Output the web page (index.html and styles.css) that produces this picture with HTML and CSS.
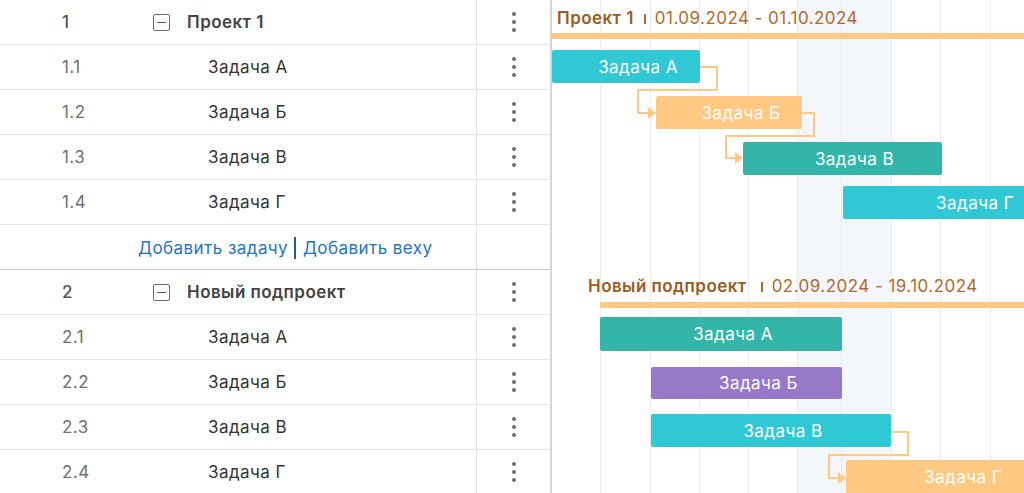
FILE: index.html
```html
<!DOCTYPE html>
<html lang="ru">

<head>
    <meta charset="UTF-8">
    <meta name="viewport" content="width=device-width, initial-scale=1.0">
    <title>Гант</title>
    <link rel="stylesheet" href="styles.css">
</head>

<body>
    <div class="app">
        <div class="grid">
            <div class="row summary">
                <div class="num">1</div>
                <div class="name"><span class="toggle"></span>Проект 1</div>
                <div class="actions"><span class="dots"><i></i><i></i><i></i></span></div>
            </div>
            <div class="row">
                <div class="num">1.1</div>
                <div class="name task">Задача А</div>
                <div class="actions"><span class="dots"><i></i><i></i><i></i></span></div>
            </div>
            <div class="row">
                <div class="num">1.2</div>
                <div class="name task">Задача Б</div>
                <div class="actions"><span class="dots"><i></i><i></i><i></i></span></div>
            </div>
            <div class="row">
                <div class="num">1.3</div>
                <div class="name task">Задача В</div>
                <div class="actions"><span class="dots"><i></i><i></i><i></i></span></div>
            </div>
            <div class="row">
                <div class="num">1.4</div>
                <div class="name task">Задача Г</div>
                <div class="actions"><span class="dots"><i></i><i></i><i></i></span></div>
            </div>
            <div class="row add-row">
                <div class="add-links">
                    <a href="#">Добавить задачу</a><span class="sep"></span><a href="#">Добавить веху</a>
                </div>
                <div class="actions"></div>
            </div>
            <div class="row summary">
                <div class="num">2</div>
                <div class="name"><span class="toggle"></span>Новый подпроект</div>
                <div class="actions"><span class="dots"><i></i><i></i><i></i></span></div>
            </div>
            <div class="row">
                <div class="num">2.1</div>
                <div class="name task">Задача А</div>
                <div class="actions"><span class="dots"><i></i><i></i><i></i></span></div>
            </div>
            <div class="row">
                <div class="num">2.2</div>
                <div class="name task">Задача Б</div>
                <div class="actions"><span class="dots"><i></i><i></i><i></i></span></div>
            </div>
            <div class="row">
                <div class="num">2.3</div>
                <div class="name task">Задача В</div>
                <div class="actions"><span class="dots"><i></i><i></i><i></i></span></div>
            </div>
            <div class="row">
                <div class="num">2.4</div>
                <div class="name task">Задача Г</div>
                <div class="actions"><span class="dots"><i></i><i></i><i></i></span></div>
            </div>
        </div>

        <div class="chart">
            <!-- timeline columns -->
            <div class="scale">
                <div class="col" style="width:49px"></div>
                <div class="col" style="width:50px"></div>
                <div class="col" style="width:49px"></div>
                <div class="col" style="width:49px"></div>
                <div class="col" style="width:49px"></div>
                <div class="col weekend" style="width:44px"></div>
                <div class="col weekend" style="width:50px"></div>
                <div class="col" style="width:49px"></div>
                <div class="col" style="width:50px"></div>
                <div class="col" style="width:40px"></div>
            </div>

            <div class="chart-rows">
                <div class="chart-row">
                    <div class="project-label" style="left:5px;top:8px">
                        <b>Проект 1</b><span class="mark"></span><span class="dates">01.09.2024 - 01.10.2024</span>
                    </div>
                    <div class="project-bar" style="left:0;top:33px"></div>
                </div>
                <div class="chart-row">
                    <div class="bar cyan" style="left:0;width:148px;top:5px">Задача А</div>
                </div>
                <div class="chart-row">
                    <div class="bar orange" style="left:104px;width:146px;top:6px">Задача Б</div>
                </div>
                <div class="chart-row">
                    <div class="bar teal" style="left:191px;width:199px;top:7px">Задача В</div>
                </div>
                <div class="chart-row">
                    <div class="bar cyan" style="left:291px;width:240px;top:6px">Задача Г</div>
                </div>
                <div class="chart-row"></div>
                <div class="chart-row">
                    <div class="project-label" style="left:36px;top:6px">
                        <b>Новый подпроект</b><span class="mark wide"></span><span class="dates">02.09.2024 - 19.10.2024</span>
                    </div>
                    <div class="project-bar" style="left:48px;top:32px"></div>
                </div>
                <div class="chart-row">
                    <div class="bar teal" style="left:48px;width:242px;top:2px;height:34px">Задача А</div>
                </div>
                <div class="chart-row">
                    <div class="bar purple" style="left:99px;width:191px;top:7px;height:32px">Задача Б</div>
                </div>
                <div class="chart-row">
                    <div class="bar cyan" style="left:99px;width:240px;top:9px">Задача В</div>
                </div>
                <div class="chart-row">
                    <div class="bar orange" style="left:294px;width:210px;top:10px">Задача Г</div>
                </div>
            </div>

            <svg class="links" width="472" height="493">
                <g fill="none" stroke="#ffc984" stroke-width="2">
                    <path d="M148 67 H165 V90 H86 V113 H97" />
                    <path d="M250 113 H262 V136 H174 V158 H184" />
                    <path d="M339 432 H356 V455 H277 V478 H287" />
                </g>
                <g fill="#ffc984">
                    <polygon points="96,107 104,113 96,119" />
                    <polygon points="183,152 191,158 183,164" />
                    <polygon points="286,472 294,478 286,484" />
                </g>
            </svg>
        </div>
    </div>
</body>

</html>
```

FILE: styles.css
```css
body {
    margin: 0;
    font-family: Inter, "Noto Sans", sans-serif;
    font-size: 17px;
    letter-spacing: 0.45px;
    color: #333;
    background: #fff;
    overflow: hidden;
}

.app {
    display: flex;
    height: 493px;
    overflow: hidden;
}

/* left table */

.grid {
    width: 550px;
    flex-shrink: 0;
    border-right: 2px solid #d4d4d4;
}

.row {
    display: flex;
    align-items: center;
    height: 44px;
    border-bottom: 1px solid #e6e6e6;
}

.num {
    width: 153px;
    padding-left: 62px;
    box-sizing: border-box;
    color: #6f6f6f;
}

.summary .num {
    color: #555;
    font-weight: 500;
}

.name {
    flex: 1;
    display: flex;
    align-items: center;
    height: 100%;
}

.summary .name {
    font-weight: 600;
    color: #444;
}

.name.task {
    padding-left: 55px;
}

.toggle {
    width: 15px;
    height: 15px;
    border: 1px solid #6a6a6a;
    border-radius: 2px;
    margin-right: 17px;
    position: relative;
    box-sizing: content-box;
}

.toggle::after {
    content: "";
    position: absolute;
    left: 3px;
    right: 3px;
    top: 7px;
    height: 1px;
    background: #555;
}

.actions {
    width: 73px;
    height: 100%;
    border-left: 1px solid #e3e3e3;
    display: flex;
    align-items: center;
    justify-content: center;
}

.dots {
    display: flex;
    flex-direction: column;
    gap: 4px;
}

.dots i {
    display: block;
    width: 4px;
    height: 4px;
    border-radius: 50%;
    background: #6e6e6e;
}

.add-row {
    border-bottom-color: #cfcfcf;
}

.add-links {
    flex: 1;
    display: flex;
    align-items: center;
    padding-left: 138px;
    padding-top: 2px;
}

.add-links a {
    color: #1f73c6;
    text-decoration: none;
}

.add-links .sep {
    width: 2px;
    height: 22px;
    background: #1f5f9e;
    margin: 0 7px 0 6px;
}

/* chart */

.chart {
    flex: 1;
    position: relative;
    overflow: hidden;
}

.scale {
    position: absolute;
    inset: 0;
    display: flex;
}

.col {
    flex-shrink: 0;
    height: 100%;
    border-right: 1px solid #ececec;
    box-sizing: border-box;
}

.col.weekend {
    background: #f3f6fa;
}

.chart-rows {
    position: relative;
}

.chart-row {
    position: relative;
    height: 45px;
}

.project-label {
    position: absolute;
    display: flex;
    align-items: center;
    white-space: nowrap;
    line-height: 20px;
}

.project-label b {
    font-weight: 600;
    color: #9b5c22;
}

.project-label .dates {
    color: #b36a2d;
}

.mark {
    width: 2px;
    height: 10px;
    background: #b36a2d;
    margin: 2px 9px 0 10px;
}

.mark.wide {
    margin-left: 14px;
}

.project-bar {
    position: absolute;
    right: 0;
    height: 6px;
    background: #ffc984;
}

.bar {
    position: absolute;
    height: 33px;
    border-radius: 2px;
    padding-left: 24px;
    box-sizing: border-box;
    display: flex;
    align-items: center;
    justify-content: center;
    color: #fff;
    white-space: nowrap;
}

.bar.cyan {
    background: #2fc8d4;
}

.bar.teal {
    background: #33b6a9;
}

.bar.orange {
    background: #ffc984;
}

.bar.purple {
    background: #9878c9;
}

.links {
    position: absolute;
    left: 0;
    top: 0;
}
```
